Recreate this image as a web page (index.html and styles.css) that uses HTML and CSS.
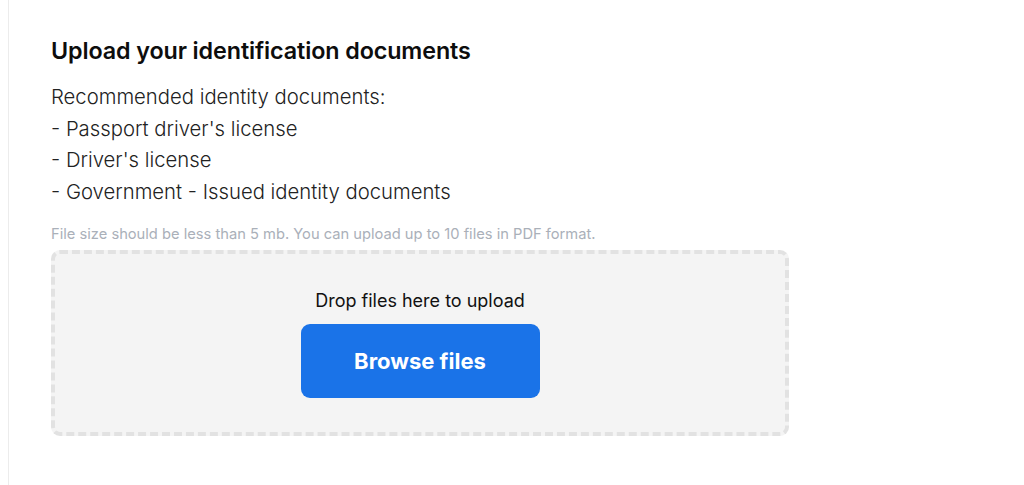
FILE: index.html
```html
<!DOCTYPE html>
<html lang="en">
<head>
    <meta charset="UTF-8">
    <meta name="viewport" content="width=device-width, initial-scale=1.0">
    <title>Upload documents</title>
    <link rel="stylesheet" href="styles.css">
</head>
<body>
    <main class="page">
        <section class="upload">
            <h2 class="upload-title">Upload your identification documents</h2>
            <div class="doc-list">
                <p>Recommended identity documents:</p>
                <p>- Passport driver's license</p>
                <p>- Driver's license</p>
                <p>- Government - Issued identity documents</p>
            </div>
            <p class="hint">File size should be less than 5 mb. You can upload up to 10 files in PDF format.</p>
            <div class="dropzone">
                <span class="drop-label">Drop files here to upload</span>
                <button class="button button-primary" type="button">Browse files</button>
            </div>
        </section>
    </main>
</body>
</html>
```

FILE: styles.css
```css
* {
    margin: 0;
    padding: 0;
    box-sizing: border-box;
}

body {
    font-family: Inter, "Noto Sans", sans-serif;
    background: #fff;
    color: #111;
}

.page {
    margin-left: 8px;
    min-height: 485px;
    border-left: 1px solid #ececec;
    padding: 37px 0 0 42px;
}

.upload {
    width: 738px;
}

.upload-title {
    font-size: 23.3px;
    font-weight: 600;
    line-height: 28px;
    letter-spacing: -0.1px;
    color: #0d0d0d;
}

.doc-list {
    margin-top: 16px;
}

.doc-list p {
    font-size: 20.3px;
    font-weight: 300;
    line-height: 31.7px;
    color: #222;
}

.hint {
    margin-top: 17px;
    font-size: 14.7px;
    line-height: 19px;
    color: #aab0b9;
}

/* Drop area */
.dropzone {
    margin-top: 6px;
    height: 186px;
    padding-top: 3px;
    background: #f4f4f4;
    border: 4px dashed #e2e2e2;
    border-radius: 9px;
    display: flex;
    flex-direction: column;
    align-items: center;
    justify-content: center;
    gap: 12px;
}

.drop-label {
    font-size: 18px;
    line-height: 22px;
    color: #111;
}

.button {
    font-family: inherit;
    border: none;
    cursor: pointer;
}

.button-primary {
    width: 239px;
    height: 74px;
    border-radius: 9px;
    background: #1a73e8;
    color: #fff;
    font-size: 22px;
    font-weight: 700;
}
```
